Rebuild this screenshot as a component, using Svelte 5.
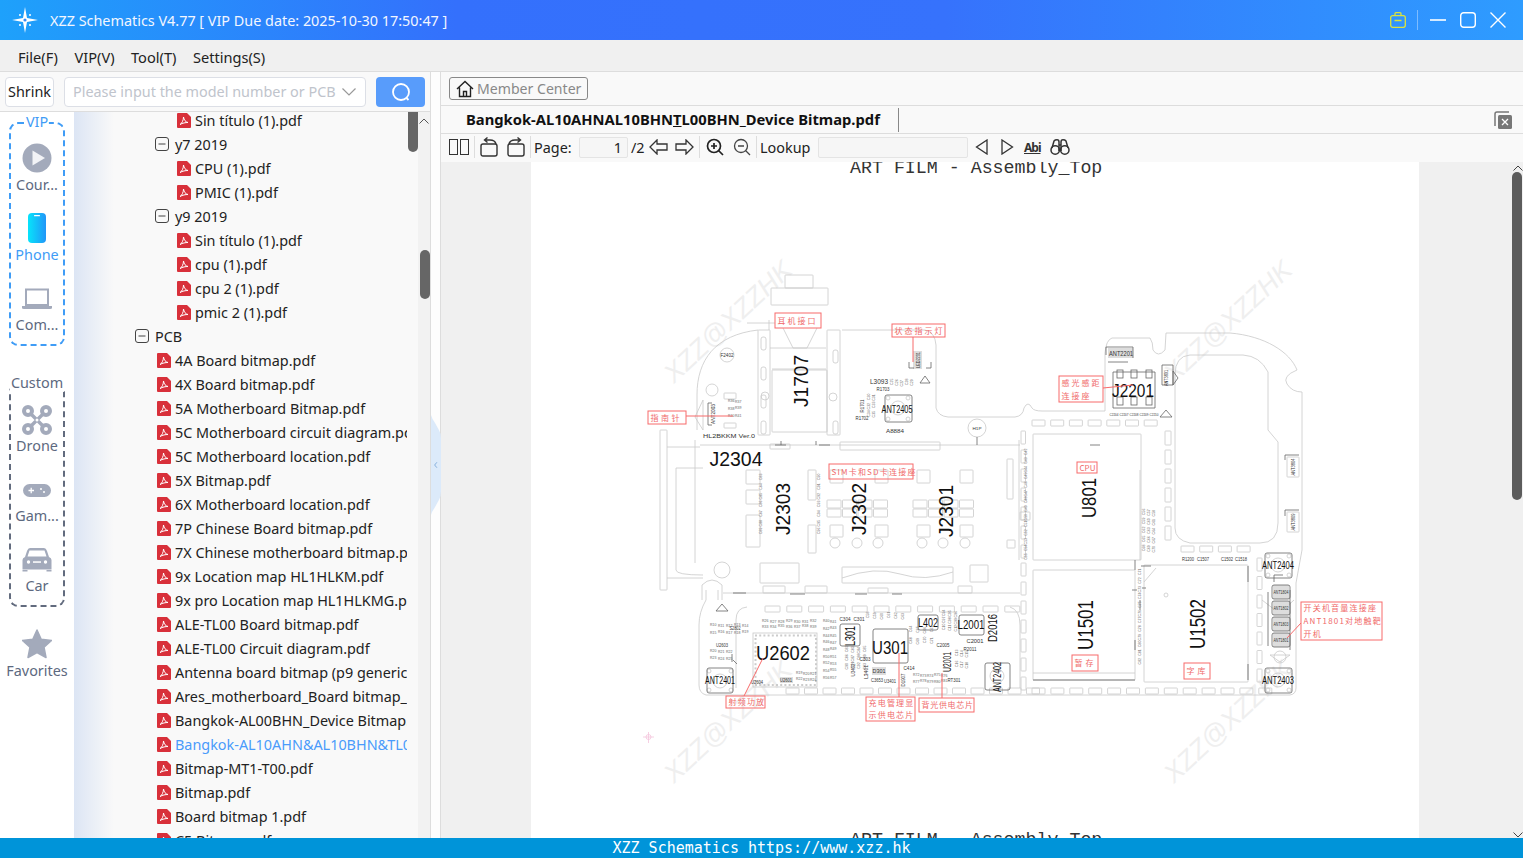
<script>
  const group1 = [
    { t: 'Sin título (1).pdf', k: 'leaf2' },
    { t: 'y7 2019', k: 'folder1' },
    { t: 'CPU (1).pdf', k: 'leaf2' },
    { t: 'PMIC (1).pdf', k: 'leaf2' },
    { t: 'y9 2019', k: 'folder1' },
    { t: 'Sin título (1).pdf', k: 'leaf2' },
    { t: 'cpu (1).pdf', k: 'leaf2' },
    { t: 'cpu 2 (1).pdf', k: 'leaf2' },
    { t: 'pmic 2 (1).pdf', k: 'leaf2' },
    { t: 'PCB', k: 'folder0' }
  ];
  const pcb = [
    '4A Board bitmap.pdf', '4X Board bitmap.pdf', '5A Motherboard Bitmap.pdf',
    '5C Motherboard circuit diagram.pdf', '5C Motherboard location.pdf', '5X Bitmap.pdf',
    '6X Motherboard location.pdf', '7P Chinese Board bitmap.pdf', '7X Chinese motherboard bitmap.pdf',
    '9x Location map HL1HLKM.pdf', '9x pro Location map HL1HLKMG.pdf', 'ALE-TL00 Board bitmap.pdf',
    'ALE-TL00 Circuit diagram.pdf', 'Antenna board bitmap (p9 generic).pdf', 'Ares_motherboard_Board bitmap_EN.pdf',
    'Bangkok-AL00BHN_Device Bitmap.pdf', 'Bangkok-AL10AHN&AL10BHN&TL00BHN_Device Bitmap.pdf', 'Bitmap-MT1-T00.pdf',
    'Bitmap.pdf', 'Board bitmap 1.pdf', 'C5 Bitmap.pdf'
  ].map((t, i) => ({ t, k: 'leaf1', active: i === 16 }));
  const rows = [...group1, ...pcb];

  const range = (n, f) => Array.from({ length: n }, (_, i) => f(i));

  const padRects = [
    ...range(7, i => [1032 + i * 18.7, 420, 13, 6]),
    ...range(7, i => [1021, 431 + i * 19, 4.5, 13]),
    ...range(7, i => [1021, 563 + i * 19, 5, 13]),
    ...range(6, i => [1165, 431 + i * 19, 6, 14]),
    ...range(12, i => [765 + i * 21.8, 606, 15, 6]),
    ...range(14, i => [786 + i * 18.5, 688, 13, 6]),
    ...range(13, i => [1032 + i * 18.9, 688, 13, 6]),
    ...range(7, i => [1257, 558 + i * 18.5, 5, 13]),
    ...range(4, i => [1181 + i * 18.7, 546, 13, 6]),
    [785, 275, 28, 13], [771, 288, 57, 17], [772, 370, 55, 62], [758, 330, 12, 105], [827, 330, 13, 105],
    [660, 430, 7, 160], [724, 393, 12, 6], [724, 423, 12, 5],
    [760, 563, 39, 20], [842, 567, 111, 16], [970, 565, 18, 17],
    [763, 586, 22, 7], [805, 586, 22, 7], [868, 588, 20, 5], [958, 586, 14, 7],
    [1033, 434, 108, 126], [1033, 570, 102, 110], [1144, 565, 104, 117],
    [1007, 459, 6, 40], [770, 444, 20, 5], [840, 442, 100, 8],
    [1287, 457, 12, 20], [1287, 512, 12, 20], [1020, 512, 10, 8], [1007, 540, 8, 8],
    ...[830, 875, 917, 960].flatMap(x => [[x, 470, 13, 13], [x, 525, 13, 12]]),
    ...range(4, i => [827 + i * 15.5, 500, 14, 8]), ...range(4, i => [827 + i * 15.5, 509, 14, 8]),
    ...range(4, i => [913 + i * 15.5, 500, 14, 8]), ...range(4, i => [913 + i * 15.5, 509, 14, 8]),
    [746, 470, 14, 14], [746, 490, 14, 14], [746, 515, 14, 32], [808, 470, 8, 30], [808, 525, 8, 28]
  ];

  const paths = [
    'M747 323H775', 'M697 430V395C697 360 715 335 758 330',
    'M842 330H925Q935 332 936 345V408Q938 416 948 417H1015Q1023 416 1024 408Q1028 400 1032 408Q1034 411 1042 411H1105V353Q1106 340 1112 338H1150Q1153 342 1153 350Q1158 358 1165 350L1166 333H1230C1265 336 1290 352 1297 370Q1282 376 1287 384Q1292 392 1302 392V550L1296 583V688Q1296 694 1290 695H706Q699 693 699 685V625Q699 612 706 600',
    'M695 440V563', 'M667 447H700', 'M667 578H703', 'M676 468H703M676 468V570Q676 575 703 575',
    'M700 445H1020', 'M723 593H1020',
    'M769 330V320M783 328L793 348H807L817 328M770 348H826M772 369H826',
    'M1175 375Q1175 356 1190 355H1243Q1260 356 1268 372V430L1278 442V523Q1278 543 1260 543H1190Q1175 540 1175 528Z',
    'M736 688V620Q736 608 747 607', 'M1010 607Q1020 610 1020 625V688',
    'M842 578Q875 566 900 574T953 572', 'M702 600V585Q712 575 722 585V600', 'M706 600V590M718 600V590',
    'M1019 440V560', 'M1140 470V560', 'M1144 582L1156 568', 'M1033 673H1135',
    'M1262 600L1275 610M1294 600L1283 610', 'M1270 655H1290L1280 662Z'
  ];
  const dark = [
    'M775 445H786M819 445H830M1090 445H1100', 'M733 593H746M790 594H805M855 594H867M892 594H902',
    'M781 441V445M816 441V445M977 437V445',
    'M712 403H708V425H712M1106 355V347H1133V358M1108 362H1128',
    'M909 362V368H914M931 362V368H926', 'M1283 575H1274V582', 'M1290 590V650M1268 592V646',
    'M1113 372H1155V408H1113Z', 'M1135 560L1135 570M1141 566H1151M1248 566V582', 'M1033 680H1135M1248 680V664',
    'M1132 590H1137M1142 588H1146', 'M1285 455H1299M1285 455V460M1285 510H1299M1285 510V516',
    'M732 654V662M733 660L737 664', 'M1140 600V610M1135 640V650'
  ];
  const circles = [
    [727, 355, 7], [712, 390, 6], [765, 396, 4], [833, 397, 4], [898, 408, 7],
    [835, 543, 5], [857, 543, 5], [878, 543, 5], [922, 543, 5], [943, 543, 5], [965, 543, 5],
    [977, 428, 9], [720, 681, 7], [997, 676, 7], [1278, 565, 7], [1278, 680, 7], [1166, 595, 2],
    [1280, 657, 6], [722, 570, 8], [709, 671, 2], [731, 671, 2], [709, 690, 2], [731, 690, 2],
    [1268, 556, 2], [1289, 556, 2], [1268, 575, 2], [1289, 575, 2],
    [1268, 671, 2], [1289, 671, 2], [1268, 690, 2], [1289, 690, 2],
    [888, 398, 2], [908, 398, 2], [888, 419, 2], [908, 419, 2]
  ];
  const squares = [
    [707, 668, 26, 25], [985, 663, 25, 27], [1265, 553, 27, 25], [1265, 668, 27, 25], [885, 395, 27, 27],
    [840, 624, 20, 22], [918, 615, 20, 15], [959, 615, 25, 20], [873, 629, 35, 34],
    ...[592, 608, 624, 640].map(y => [1272, y - 7, 18, 14])
  ];
  const grayBoxes = [[1108, 348, 25, 10], [913, 351, 9, 18], [780, 677, 13, 6], [872, 667, 14, 8], [1273, 585, 16, 14], [1273, 601, 16, 14], [1273, 617, 16, 14], [1273, 633, 16, 14]];
  const u2602dots = [
    ...range(15, i => [755 + i * 4.2, 634.5]), ...range(15, i => [755 + i * 4.2, 684]),
    ...range(11, i => [754.5, 638 + i * 4.2]), ...range(11, i => [815, 638 + i * 4.2])
  ];
  const j2201pads = [...[1117, 1131, 1146].flatMap(x => [[x, 370], [x, 397]])];
  const big = [
    ['J1707', 800, 381, 21, 52, -90], ['J2304', 736, 458, 21, 53, 0], ['J2303', 782, 509, 21, 52, -90],
    ['J2302', 858, 509, 21, 52, -90], ['J2301', 945, 511, 21, 52, -90], ['U801', 1088, 498, 21, 40, -90],
    ['J2201', 1133, 390, 19, 42, 0], ['U1501', 1085, 625, 22, 50, -90], ['U1502', 1197, 624, 22, 50, -90],
    ['U2602', 783, 652, 21, 54, 0], ['U301', 890, 647, 19, 36, 0], ['L301', 850, 636, 14, 20, -90],
    ['L402', 928, 623, 12, 20, 0], ['L2001', 971, 625, 12, 27, 0], ['D2016', 993, 628, 12, 28, -90],
    ['U2001', 947, 662, 11, 20, -90], ['ANT2401', 720, 680, 10, 30, 0], ['ANT2402', 997, 677, 10, 30, -90],
    ['ANT2404', 1278, 565, 10, 32, 0], ['ANT2403', 1278, 680, 10, 32, 0], ['ANT2405', 897, 409, 10, 31, 0]
  ];
  const small = [
    ['ANT2201', 1121, 353, 7, 24, 0], ['L3093', 879, 381, 7, 18, 0], ['F2402', 727, 355, 5, 13, 0],
    ['HL2BKKM Ver.0', 729, 436, 5, 52, 0], ['A8884', 895, 431, 5, 18, 0], ['ANT2003', 713, 414, 5, 20, -90],
    ['LED2201', 918, 360, 5, 16, -90], ['ANT3801', 1166, 378, 5, 16, -90], ['ANT3804', 1293, 467, 5, 17, -90],
    ['ANT3809', 1293, 522, 5, 17, -90], ['ANT1804', 1281, 592, 5, 15, 0], ['ANT1802', 1281, 608, 5, 15, 0],
    ['ANT1803', 1281, 624, 5, 15, 0], ['ANT1801', 1281, 640, 5, 15, 0], ['R1200', 1188, 559, 5, 12, 0],
    ['C1507', 1203, 559, 5, 12, 0], ['C1502', 1227, 559, 5, 12, 0], ['C1518', 1241, 559, 5, 12, 0],
    ['C304', 845, 619, 5, 11, 0], ['C301', 859, 619, 5, 11, 0], ['C303', 865, 659, 5, 11, 0], ['D301', 879, 671, 6, 13, 0],
    ['C414', 909, 668, 5, 11, 0], ['C2001', 975, 641, 6, 17, 0], ['R2011', 970, 649, 5, 13, 0], ['C2005', 943, 645, 5, 13, 0],
    ['U2603', 722, 645, 5, 12, 0], ['S2802', 735, 628, 5, 11, 0], ['U2604', 757, 682, 5, 12, 0], ['U2601', 786, 680, 5, 12, 0],
    ['U3401', 890, 681, 5, 12, 0], ['L3401', 866, 672, 6, 14, -90], ['RT301', 954, 680, 5, 13, 0], ['D1907', 903, 680, 5, 13, -90],
    ['C3653', 877, 680, 5, 12, 0], ['U3402', 853, 670, 5, 13, -90], ['R1703', 883, 389, 5, 13, 0], ['R1701', 862, 406, 5, 13, -90],
    ['R1702', 862, 418, 5, 13, 0], ['H1P', 977, 428, 4, 9, 0],
    ['C2204', 1114, 414, 4, 9, 0], ['C2207', 1124, 414, 4, 9, 0], ['C2208', 1134, 414, 4, 9, 0], ['C2209', 1144, 414, 4, 9, 0], ['C2210', 1154, 414, 4, 9, 0]
  ];
  const cluster = (x0, y0, cols, rows, dx, dy, vert) =>
    range(cols * rows, i => [x0 + (i % cols) * dx, y0 + Math.floor(i / cols) * dy + ((i * 7) % 3) * 0.7, vert]);
  const tiny = [
    ...cluster(710, 626, 5, 2, 8, 7, false),
    ...cluster(710, 652, 3, 2, 8, 7, false),
    ...cluster(762, 622, 7, 2, 8, 5, false),
    ...cluster(823, 622, 2, 9, 7, 7, false),
    ...cluster(869, 618, 6, 1, 7, 6, true),
    ...cluster(912, 632, 4, 2, 7, 11, true),
    ...cluster(913, 676, 5, 2, 7, 6, false),
    ...cluster(848, 652, 4, 3, 6, 8, true),
    ...cluster(945, 616, 3, 3, 6, 7, true),
    ...cluster(958, 656, 3, 2, 5, 11, true),
    ...cluster(796, 674, 3, 2, 7, 6, false),
    ...cluster(893, 385, 5, 1, 5, 6, true),
    ...cluster(870, 400, 2, 3, 5, 8, true),
    ...cluster(728, 402, 2, 3, 7, 7, false),
    ...cluster(1027, 455, 1, 14, 5, 8, true),
    ...cluster(1145, 515, 3, 5, 5, 9, true),
    ...cluster(1141, 575, 1, 12, 5, 8, true),
    ...cluster(762, 480, 1, 7, 5, 9, true),
    ...cluster(820, 480, 1, 7, 5, 9, true)
  ];
  const marks = [[674, 384], [1174, 384], [674, 784], [1174, 784]];
  const notes = [
    { x: 775, y: 313, w: 46, h: 15, l: ['耳机接口'], ls: 2 },
    { x: 892, y: 324, w: 53, h: 13, l: ['状态指示灯'], ls: 2 },
    { x: 648, y: 411, w: 38, h: 13, l: ['指南针'], ls: 2.5 },
    { x: 1059, y: 376, w: 44, h: 26, l: ['感光感距', '连接座'], ls: 2 },
    { x: 829, y: 464, w: 84, h: 15, l: ['SIM卡和SD卡连接座'], ls: 1.2 },
    { x: 1077, y: 462, w: 20, h: 11, l: ['CPU'], ls: 0 },
    { x: 1072, y: 655, w: 26, h: 16, l: ['暂存'], ls: 3 },
    { x: 1184, y: 663, w: 26, h: 16, l: ['字库'], ls: 3 },
    { x: 726, y: 696, w: 39, h: 12, l: ['射频功放'], ls: 1.2 },
    { x: 866, y: 697, w: 49, h: 24, l: ['充电管理显', '示供电芯片'], ls: 1.2 },
    { x: 919, y: 698, w: 55, h: 14, l: ['背光供电芯片'], ls: 0.7 },
    { x: 1301, y: 602, w: 81, h: 38, l: ['开关机音量连接座', 'ANT1801对地触靶', '开机'], ls: 1.2 }
  ];
  const redLines = ['M686 416H733', 'M913 337V362', 'M1103 388L1133 385', 'M744 696L763 658', 'M899 653V697', 'M942 673V698', 'M1301 623L1287 638'];
</script>

<div class="app">
  <header class="titlebar">
    <svg class="logo" viewBox="0 0 26 26">
      <path d="M13 0L15 11L26 13L15 15L13 26L11 15L0 13L11 11Z" fill="#fff"/>
      <circle cx="13" cy="13" r="1.6" fill="#3a8cf5"/>
      <circle cx="8" cy="8" r="1" fill="#fff"/><circle cx="18" cy="8" r="1" fill="#fff"/>
      <circle cx="8" cy="18" r="1" fill="#fff"/><circle cx="18" cy="18" r="1" fill="#fff"/>
    </svg>
    <span class="apptitle">XZZ Schematics V4.77 [ VIP Due date: 2025-10-30 17:50:47 ]</span>
    <div class="winctl">
      <svg class="case" viewBox="0 0 16 16" fill="none" stroke="#dbe33d" stroke-width="1.3">
        <rect x=".7" y="3.7" width="14.6" height="11.6" rx="2"/><path d="M5 3.7V1.7Q5 .7 6 .7H10Q11 .7 11 1.7V3.7M4.5 8.5H11.5"/>
      </svg>
      <i class="winsep"></i>
      <svg class="wbtn" viewBox="0 0 16 16" stroke="#fff" stroke-width="1.6" fill="none"><path d="M0 8H16"/></svg>
      <svg class="wbtn" viewBox="0 0 16 16" stroke="#fff" stroke-width="1.4" fill="none"><rect x=".7" y=".7" width="14.6" height="14.6" rx="3"/></svg>
      <svg class="wbtn" viewBox="0 0 16 16" stroke="#fff" stroke-width="1.4" fill="none"><path d="M.5 .5L15.5 15.5M15.5 .5L.5 15.5"/></svg>
    </div>
  </header>

  <nav class="menubar">
    <span>File(F)</span><span>VIP(V)</span><span>Tool(T)</span><span>Settings(S)</span>
  </nav>

  <div class="body">
    <section class="left">
      <div class="searchrow">
        <button class="shrink">Shrink</button>
        <div class="select">
          <span class="ph">Please input the model number or PCB</span>
          <svg class="chev" viewBox="0 0 14 8" fill="none" stroke="#999" stroke-width="1.2"><path d="M.5 .5L7 7L13.500 .5"/></svg>
        </div>
        <button class="go" aria-label="Search">
          <svg viewBox="0 0 20 20" fill="none" stroke="#fff" stroke-width="1.8"><circle cx="10" cy="10" r="8"/><path d="M15.5 16L17.5 18"/></svg>
        </button>
      </div>
      <div class="leftmain">
        <aside class="side">
          <div class="box vip">
            <span class="legend">VIP</span>
            <div class="item">
              <svg class="ico" viewBox="0 0 30 30"><circle cx="15" cy="15" r="14.5" fill="#a3aabb"/><path d="M10.5 7.5L23 15L10.5 22.5Z" fill="#f2f3f6"/></svg>
              <span>Cour...</span>
            </div>
            <div class="item on">
              <svg class="ico" viewBox="0 0 30 30">
                <defs><linearGradient id="ph" x1="0" x2="1" y1="0" y2="0"><stop offset="0" stop-color="#07e4fb"/><stop offset="1" stop-color="#2196f8"/></linearGradient></defs>
                <rect x="6" y="0" width="18" height="30" rx="4" fill="url(#ph)"/><rect x="12" y="2" width="6" height="1.3" rx=".6" fill="#fff"/>
              </svg>
              <span>Phone</span>
            </div>
            <div class="item">
              <svg class="ico" viewBox="0 0 30 30" fill="#a3aabb"><path d="M3 5.5H27V23H3ZM5 7.5V21H25V7.5Z" fill-rule="evenodd"/><path d="M0 23H30V25Q30 26 28 26H2Q0 26 0 25Z"/></svg>
              <span>Com...</span>
            </div>
          </div>
          <div class="box custom">
            <span class="legend">Custom</span>
            <div class="item">
              <svg class="ico" viewBox="0 0 30 30" fill="none" stroke="#a3aabb">
                <circle cx="6" cy="6" r="4" stroke-width="4"/><circle cx="24" cy="6" r="4" stroke-width="4"/><circle cx="6" cy="24" r="4" stroke-width="4"/><circle cx="24" cy="24" r="4" stroke-width="4"/>
                <path d="M8 8L22 22M22 8L8 22" stroke-width="3.4"/><circle cx="15" cy="15" r="1.5" fill="#fff" stroke="none"/>
              </svg>
              <span>Drone</span>
            </div>
            <div class="item">
              <svg class="ico" viewBox="0 0 30 30"><rect x="1" y="9" width="28" height="13" rx="6.5" fill="#a3aabb"/><path d="M6.5 15.5H12M9.2 12.8V18.2" stroke="#fff" stroke-width="1.3"/><circle cx="19" cy="14" r="1" fill="#fff"/><circle cx="22" cy="17" r="1" fill="#fff"/></svg>
              <span>Gam...</span>
            </div>
            <div class="item">
              <svg class="ico" viewBox="0 0 30 30" fill="#a3aabb"><path d="M8 3H22Q24 3 25 6L27 12Q29.500 13 29.500 15V24H24.500V26.500H29.500V24.500H.5V26.500H5.500V24H.5V15Q.5 13 3 12L5 6Q6 3 8 3Z"/><path d="M7.500 5.500H22.500L24.500 11.500H5.500Z" fill="#fff"/><circle cx="6.500" cy="17" r="1.700" fill="#fff"/><circle cx="23.500" cy="17" r="1.700" fill="#fff"/><rect x="11" y="16.300" width="8" height="1.500" fill="#fff"/></svg>
              <span>Car</span>
            </div>
          </div>
          <div class="item fav">
            <svg class="ico" viewBox="0 0 30 30"><path d="M15 1L19.200 10.200L29.500 11.400L22 18.200L24 28.500L15 23.500L6 28.500L8 18.200L.5 11.400L10.800 10.200Z" fill="#a3aabb" stroke="#a3aabb" stroke-linejoin="round" stroke-width="1.500"/></svg>
            <span>Favorites</span>
          </div>
        </aside>
        <div class="tree">
          <div class="rows">
            {#each rows as r}
              <div class="row {r.k}" class:active={r.active}>
                {#if r.k.startsWith('folder')}
                  <svg class="tog" viewBox="0 0 14 14" fill="none" stroke="#444"><rect x=".5" y=".5" width="13" height="13" rx="2.500"/><path d="M3.500 7H10.500"/></svg>
                {:else}
                  <svg class="pdf" viewBox="0 0 14 15">
                    <path d="M1 0H10L14 4V14Q14 15 13 15H1Q0 15 0 14V1Q0 0 1 0Z" fill="#d8303a"/>
                    <path d="M3 11.500C5 10.500 6.500 7 6.500 4C7 7 8.500 9 11 9.500C8.500 9.500 5.500 10 3 11.500Z" fill="none" stroke="#fff" stroke-width="1"/>
                  </svg>
                {/if}
                <span class="rt">{r.t}</span>
              </div>
            {/each}
          </div>
          <i class="thumb1"></i>
        </div>
        <div class="track">
          <svg class="up" viewBox="0 0 10 6" fill="none" stroke="#555"><path d="M.5 5.500L5 1L9.500 5.500"/></svg>
          <i class="thumb2"></i>
        </div>
      </div>
    </section>

    <div class="splitter">
      <svg class="handle" viewBox="0 0 11 110">
        <path d="M0 0Q1 4 4 8L9 17Q11 20 11 26V84Q11 90 9 93L4 102Q1 106 0 110Z" fill="#dceafa"/>
        <path d="M6.500 52L4 55L6.500 58" fill="none" stroke="#7da9d8"/>
      </svg>
    </div>

    <section class="right">
      <div class="memberrow">
        <button class="member">
          <svg viewBox="0 0 18 18" fill="none" stroke="#222" stroke-width="1.400"><path d="M1 9L9 1.500L17 9M3.500 7.500V16.500H14.500V7.500M7.500 16.500V11.500H10.500V16.500"/></svg>
          <span>Member Center</span>
        </button>
      </div>
      <div class="tabrow">
        <div class="tab">Bangkok-AL10AHNAL10BHN<u>T</u>L00BHN_Device Bitmap.pdf</div>
        <svg class="closeall" viewBox="0 0 18 18">
          <path d="M1 15V3Q1 1 3 1H15" fill="none" stroke="#777" stroke-width="1.500"/>
          <rect x="4" y="4" width="14" height="14" rx="1.500" fill="#777"/>
          <path d="M8 8L14 14M14 8L8 14" stroke="#fff" stroke-width="1.300"/>
        </svg>
      </div>
      <div class="toolbar">
        <svg class="t-pane" viewBox="0 0 20 16" fill="none" stroke="#333"><rect x=".5" y=".5" width="8" height="15"/><rect x="11.500" y=".5" width="8" height="15"/></svg>
        <i class="tsep s1"></i>
        <svg class="t-rot r1" viewBox="0 0 18 20" fill="none" stroke="#333" stroke-width="1.400"><rect x="1" y="7" width="16" height="12" rx="2"/><path d="M16 7Q15 3 10 3H5M7.500 .5L4.500 3L7.500 5.500"/></svg>
        <svg class="t-rot r2" viewBox="0 0 18 20" fill="none" stroke="#333" stroke-width="1.400"><rect x="1" y="7" width="16" height="12" rx="2"/><path d="M2 7Q3 3 8 3H13M10.500 .5L13.500 3L10.500 5.500"/></svg>
        <i class="tsep s2"></i>
        <span class="t-page">Page:</span>
        <div class="t-input pg">1</div>
        <span class="t-of">/2</span>
        <svg class="t-arr a1" viewBox="0 0 19 16" fill="none" stroke="#333" stroke-width="1.300"><path d="M8 1L1 8L8 15V11H18V5H8Z"/></svg>
        <svg class="t-arr a2" viewBox="0 0 19 16" fill="none" stroke="#333" stroke-width="1.300"><path d="M11 1L18 8L11 15V11H1V5H11Z"/></svg>
        <i class="tsep s3"></i>
        <svg class="t-zoom z1" viewBox="0 0 18 18" fill="none" stroke="#222" stroke-width="1.700"><circle cx="8" cy="8" r="6.500"/><path d="M12.500 12.500L17 17M5 8H11M8 5V11"/></svg>
        <svg class="t-zoom z2" viewBox="0 0 18 18" fill="none" stroke="#444" stroke-width="1.300"><circle cx="8" cy="8" r="6.500"/><path d="M12.500 12.500L17 17M5 8H11"/></svg>
        <i class="tsep s4"></i>
        <span class="t-look">Lookup</span>
        <div class="t-input lk"></div>
        <svg class="t-tri p1" viewBox="0 0 13 16" fill="none" stroke="#333" stroke-width="1.300"><path d="M12 1L1.500 8L12 15Z"/></svg>
        <svg class="t-tri p2" viewBox="0 0 13 16" fill="none" stroke="#333" stroke-width="1.300"><path d="M1 1L11.500 8L1 15Z"/></svg>
        <span class="t-abi">Abi</span>
        <svg class="t-bino" viewBox="0 0 20 16" fill="none" stroke="#333" stroke-width="1.500"><path d="M2 9L4 2Q5 .8 7 .8Q9 .8 9 3V12M18 9L16 2Q15 .8 13 .8Q11 .8 11 3V12M9 6H11"/><circle cx="5.200" cy="11" r="4.200"/><circle cx="14.800" cy="11" r="4.200"/></svg>
      </div>
      <div class="canvas">
        <div class="page">
          <div class="arttitle top">ART FILM - Assembly_Top</div>
          <svg class="pcb" viewBox="531 162 888 670">
            {#each marks as m}
              <text class="wm" x={m[0]} y={m[1]} transform="rotate(-43 {m[0]} {m[1]})">XZZ@XZZHK</text>
            {/each}
            {#each paths as d}<path class="ln" {d}/>{/each}
            {#each padRects as r}<rect class="ln" x={r[0]} y={r[1]} width={r[2]} height={r[3]} rx=".6"/>{/each}
            {#each [[761,337],[761,367],[761,421],[833,350],[833,421],[761,395]] as s}<rect class="ln" x={s[0]} y={s[1]} width="5" height="13" rx="2"/>{/each}
            {#each grayBoxes as b}<rect class="gbox" x={b[0]} y={b[1]} width={b[2]} height={b[3]}/>{/each}
            {#each circles as c}<circle class="ln" cx={c[0]} cy={c[1]} r={c[2]}/>{/each}
            {#each squares as s}<rect class="dk" x={s[0]} y={s[1]} width={s[2]} height={s[3]} rx="2"/>{/each}
            {#each dark as d}<path class="dk" {d}/>{/each}
            <rect class="ln" x="753" y="633" width="64" height="54"/>
            {#each u2602dots as d}<rect class="dot" x={d[0]} y={d[1]} width="2" height="2"/>{/each}
            {#each j2201pads as p}<rect class="dk" x={p[0]} y={p[1]} width="6" height="8"/>{/each}
            <path class="dk" d="M925 376L930 383H920ZM1166 410L1172 417H1160ZM722 604L728 611H716ZM1173 371L1178 378L1173 385ZM1162 365H1173V385H1162Z"/>
            <path class="ln" d="M695 417L703 400V430Z"/>
            {#each tiny as t, i}
              {#if t[2]}
                <text class="tiny" x={t[0]} y={t[1]} transform="rotate(-90 {t[0]} {t[1]})">C{10 + i % 90}</text>
              {:else}
                <text class="tiny" x={t[0]} y={t[1]}>R{10 + i % 90}</text>
              {/if}
            {/each}
            {#each small as t}
              <text class="lab sm" x={t[1]} y={t[2]} font-size={t[3]} textLength={t[4]} lengthAdjust="spacingAndGlyphs" transform="rotate({t[5]} {t[1]} {t[2]})">{t[0]}</text>
            {/each}
            {#each big as t}
              <text class="lab" x={t[1]} y={t[2]} font-size={t[3]} textLength={t[4]} lengthAdjust="spacingAndGlyphs" transform="rotate({t[5]} {t[1]} {t[2]})">{t[0]}</text>
            {/each}
            {#each redLines as d}<path class="red" {d}/>{/each}
            {#each notes as n}
              <rect class="red" x={n.x} y={n.y} width={n.w} height={n.h}/>
              {#each n.l as line, i}
                <text class="note" x={n.x + 2.500} y={n.y + n.h / n.l.length * i + n.h / n.l.length / 2 + 3} letter-spacing={n.ls}>{line}</text>
              {/each}
            {/each}
            <path class="cross" d="M643 737H654M648.500 732V743"/>
            <circle class="cross" cx="648.500" cy="737" r="2.500"/>
          </svg>
          <div class="arttitle bottom">ART FILM - Assembly_Top</div>
        </div>
        <div class="pdfscroll">
          <svg class="pu" viewBox="0 0 10 6" fill="none" stroke="#444"><path d="M.5 5.500L5 1L9.500 5.500"/></svg>
          <i class="thumb3"></i>
          <svg class="pd" viewBox="0 0 10 6" fill="none" stroke="#444"><path d="M.5 .5L5 5L9.500 .5"/></svg>
        </div>
      </div>
    </section>
  </div>

  <footer class="foot">XZZ Schematics https://www.xzz.hk</footer>
</div>

<style>
  :global(body) { margin: 0; overflow: hidden; }
  .app { width: 1523px; height: 858px; display: flex; flex-direction: column; overflow: hidden; font-family: "Noto Sans", "Noto Sans CJK SC", sans-serif; font-size: 14.4px; color: #222; background: #f9f9f9; }
  i { display: block; font-style: normal; }
  button { font: inherit; padding: 0; }

  .titlebar { height: 40px; flex: none; display: flex; align-items: center; padding-left: 12px; background: linear-gradient(90deg, #1ea1fb 0, #3470fc 30%, #3672fc 62%, #2e9cff 100%); }
  .logo { width: 26px; height: 26px; }
  .apptitle { margin-left: 12px; color: #f2f6ff; font-size: 14.4px; white-space: nowrap; }
  .winctl { margin-left: auto; display: flex; align-items: center; padding-right: 17px; }
  .case { width: 16px; height: 16px; }
  .winsep { width: 1px; height: 20px; background: #7dbcff; margin: 0 12px 0 11px; }
  .wbtn { width: 16px; height: 16px; margin-right: 14px; }
  .wbtn:last-child { margin-right: 0; }

  .menubar { height: 32px; flex: none; box-sizing: border-box; display: flex; align-items: center; gap: 16.5px; padding: 2px 0 0 18px; background: #f0f0f0; border-bottom: 1px solid #ddd; font-size: 14.6px; }

  .body { flex: 1; min-height: 0; display: flex; }
  .left { width: 430px; flex: none; display: flex; flex-direction: column; min-height: 0; }
  .searchrow { height: 40px; flex: none; box-sizing: border-box; display: flex; align-items: center; padding: 0 5px 0 5px; background: #f9f9f9; border-bottom: 1px solid #ddd; }
  .shrink { width: 49px; height: 30px; box-sizing: border-box; border: 1px solid #dcdfe6; border-radius: 4px; background: #fff; color: #222; font-size: 14.4px; white-space: nowrap; overflow: hidden; }
  .select { width: 302px; height: 30px; box-sizing: border-box; margin-left: 10px; border: 1px solid #dcdfe6; border-radius: 4px; background: #fff; display: flex; align-items: center; padding: 0 9px 0 8px; }
  .ph { color: #c0c4cc; font-size: 14.4px; white-space: nowrap; overflow: hidden; flex: 1; }
  .chev { width: 14px; height: 8px; flex: none; }
  .go { width: 49px; height: 30px; margin-left: 10px; border: 0; border-radius: 4px; background: #589cfb; display: flex; align-items: center; justify-content: center; }
  .go svg { width: 20px; height: 20px; }

  .leftmain { flex: 1; min-height: 0; display: flex; }
  .side { width: 74px; flex: none; box-sizing: border-box; background: #fff; padding: 10px 0 0 9px; display: flex; flex-direction: column; align-items: flex-start; color: #5d6980; }
  .box { position: relative; width: 56px; box-sizing: border-box; border: 2px dashed; border-radius: 9px; display: flex; flex-direction: column; align-items: center; gap: 20px; }
  .vip { height: 224px; border-color: #3f9cf6; padding-top: 19px; }
  .custom { height: 224px; margin-top: 37px; border-color: #626b7e; padding-top: 20px; }
  .legend { position: absolute; top: -11px; left: 50%; transform: translateX(-50%); background: #fff; padding: 0 1px; line-height: 18px; white-space: nowrap; font-size: 14.4px; }
  .vip .legend { color: #3f9cf6; }
  .item { width: 56px; height: 50px; flex: none; display: flex; flex-direction: column; align-items: center; font-size: 14.4px; line-height: 20px; white-space: nowrap; }
  .item.on { color: #3f9cf6; }
  .ico { width: 30px; height: 30px; flex: none; margin-bottom: 2px; }
  .custom .item span { margin-top: -1px; }
  .fav { width: 58px; margin-top: 22px; margin-left: -1px; }

  .tree { flex: 1; min-width: 0; position: relative; overflow: hidden; background: linear-gradient(90deg, #dce5f4 0, #f9f9f9 40px); }
  .rows { width: 333px; overflow: hidden; margin-top: -4px; }
  .row { height: 24px; display: flex; align-items: center; white-space: nowrap; }
  .leaf2 { padding-left: 103px; }
  .leaf1 { padding-left: 83px; }
  .folder1 { padding-left: 81px; }
  .folder0 { padding-left: 61px; }
  .pdf { width: 14px; height: 15px; flex: none; margin-right: 4px; }
  .tog { width: 14px; height: 14px; flex: none; margin-right: 6px; }
  .rt { font-size: 14.4px; }
  .active .rt { color: #4a9bfb; }
  .thumb1 { position: absolute; top: 0; left: 334px; width: 10px; height: 40px; background: #666; border-radius: 0 0 5px 5px; }
  .track { width: 12px; flex: none; position: relative; background: #f2f2f2; }
  .up { position: absolute; top: 6px; left: 1px; width: 10px; height: 6px; }
  .thumb2 { position: absolute; top: 138px; left: 2px; width: 10px; height: 49px; background: #666; border-radius: 5px; }

  .splitter { width: 11px; flex: none; position: relative; background: #fdfdfd; border-left: 1px solid #ddd; border-right: 1px solid #ddd; box-sizing: border-box; }
  .handle { position: absolute; top: 338px; left: 0; width: 10px; height: 110px; }

  .right { flex: 1; min-width: 0; display: flex; flex-direction: column; }
  .memberrow { height: 34px; flex: none; box-sizing: border-box; padding: 5px 0 0 8px; border-bottom: 1px solid #ddd; background: #f9f9f9; }
  .member { height: 23px; width: 139px; box-sizing: border-box; border: 1px solid #888; border-radius: 3px; background: #f9f9f9; display: flex; align-items: center; padding-left: 6px; color: #888; font-size: 14.1px; white-space: nowrap; }
  .member svg { width: 18px; height: 18px; margin-right: 3px; flex: none; }
  .tabrow { height: 28px; flex: none; box-sizing: border-box; display: flex; align-items: center; border-bottom: 1px solid #ddd; background: #f9f9f9; padding-right: 11px; }
  .tab { height: 24px; box-sizing: border-box; padding: 0 18px 0 25px; border-right: 1px solid #888; font-weight: 700; font-size: 14.75px; line-height: 22px; color: #111; white-space: nowrap; }
  .closeall { width: 18px; height: 18px; margin-left: auto; }
  .toolbar { height: 28px; flex: none; box-sizing: border-box; display: flex; align-items: center; padding: 0 0 2px 8px; background: #f9f9f9; color: #222; font-size: 14.4px; }
  .toolbar span { white-space: nowrap; }
  .t-pane { width: 20px; height: 16px; flex: none; }
  .tsep { width: 1px; height: 22px; background: #ddd; flex: none; }
  .s1 { margin-left: 5px; } .s2 { margin-left: 5px; } .s3 { margin-left: 5px; } .s4 { margin-left: 5px; }
  .t-rot { width: 18px; height: 20px; flex: none; }
  .r1 { margin-left: 5px; } .r2 { margin-left: 9px; }
  .t-page { width: 38px; margin-left: 3px; }
  .t-input { height: 21px; box-sizing: border-box; border: 1px solid #e4e4e4; border-radius: 2px; background: #f6f6f6; flex: none; }
  .pg { width: 49px; margin-left: 7px; text-align: right; padding-right: 5px; line-height: 19px; }
  .t-of { width: 14px; margin-left: 3px; }
  .t-arr { width: 19px; height: 16px; flex: none; }
  .a1 { margin-left: 4px; } .a2 { margin-left: 7px; }
  .t-zoom { width: 18px; height: 18px; flex: none; }
  .z1 { margin-left: 6px; } .z2 { margin-left: 9px; }
  .t-look { width: 51px; margin-left: 3px; }
  .lk { width: 150px; margin-left: 7px; }
  .t-tri { width: 13px; height: 16px; flex: none; }
  .p1 { margin-left: 7px; } .p2 { margin-left: 13px; }
  .t-abi { width: 19px; margin-left: 10px; font-size: 12px; font-weight: 700; letter-spacing: -1px; text-decoration: underline; color: #333; }
  .t-bino { width: 20px; height: 16px; margin-left: 7px; flex: none; }

  .canvas { flex: 1; min-height: 0; position: relative; background: #f0f0f0; display: flex; padding-left: 90px; }
  .page { width: 888px; background: #fff; position: relative; overflow: hidden; }
  .arttitle { position: absolute; left: 319px; font-family: "Liberation Mono", monospace; font-size: 18.3px; line-height: 20px; color: #333; white-space: nowrap; }
  .top { top: -4px; }
  .bottom { top: 668px; }
  .pcb { display: block; width: 888px; height: 670px; }
  .ln { fill: none; stroke: #c9c9c9; stroke-width: .8; }
  .dk { fill: none; stroke: #666; stroke-width: .8; }
  .gbox { fill: #ddd; }
  .dot { fill: #ccc; }
  .wm { font-family: "Liberation Sans", sans-serif; font-style: italic; font-size: 26.5px; fill: #efefef; }
  .tiny { font-family: "Liberation Sans", sans-serif; font-size: 3.5px; fill: #666; }
  .lab { font-family: "Liberation Sans", sans-serif; fill: #111; text-anchor: middle; dominant-baseline: central; }
  .sm { fill: #333; }
  .red { fill: none; stroke: #f76a6a; stroke-width: 1; }
  .note { font-family: "Noto Sans CJK SC", sans-serif; font-size: 8px; fill: #f06a6a; }
  .cross { fill: none; stroke: #f4c4dc; stroke-width: .8; }

  .pdfscroll { position: absolute; top: 0; right: 0; width: 11px; bottom: 0; }
  .pu { position: absolute; top: 3px; left: 1px; width: 10px; height: 6px; }
  .pd { position: absolute; bottom: 0; left: 1px; width: 10px; height: 6px; }
  .thumb3 { position: absolute; top: 10px; left: 0; width: 10px; height: 328px; background: #5c5c5c; border-radius: 5px; }

  .foot { height: 20px; flex: none; background: #0094d9; color: #fff; font-family: "DejaVu Sans Mono", monospace; font-size: 15px; line-height: 20px; text-align: center; white-space: nowrap; position: relative; z-index: 1; }
</style>
